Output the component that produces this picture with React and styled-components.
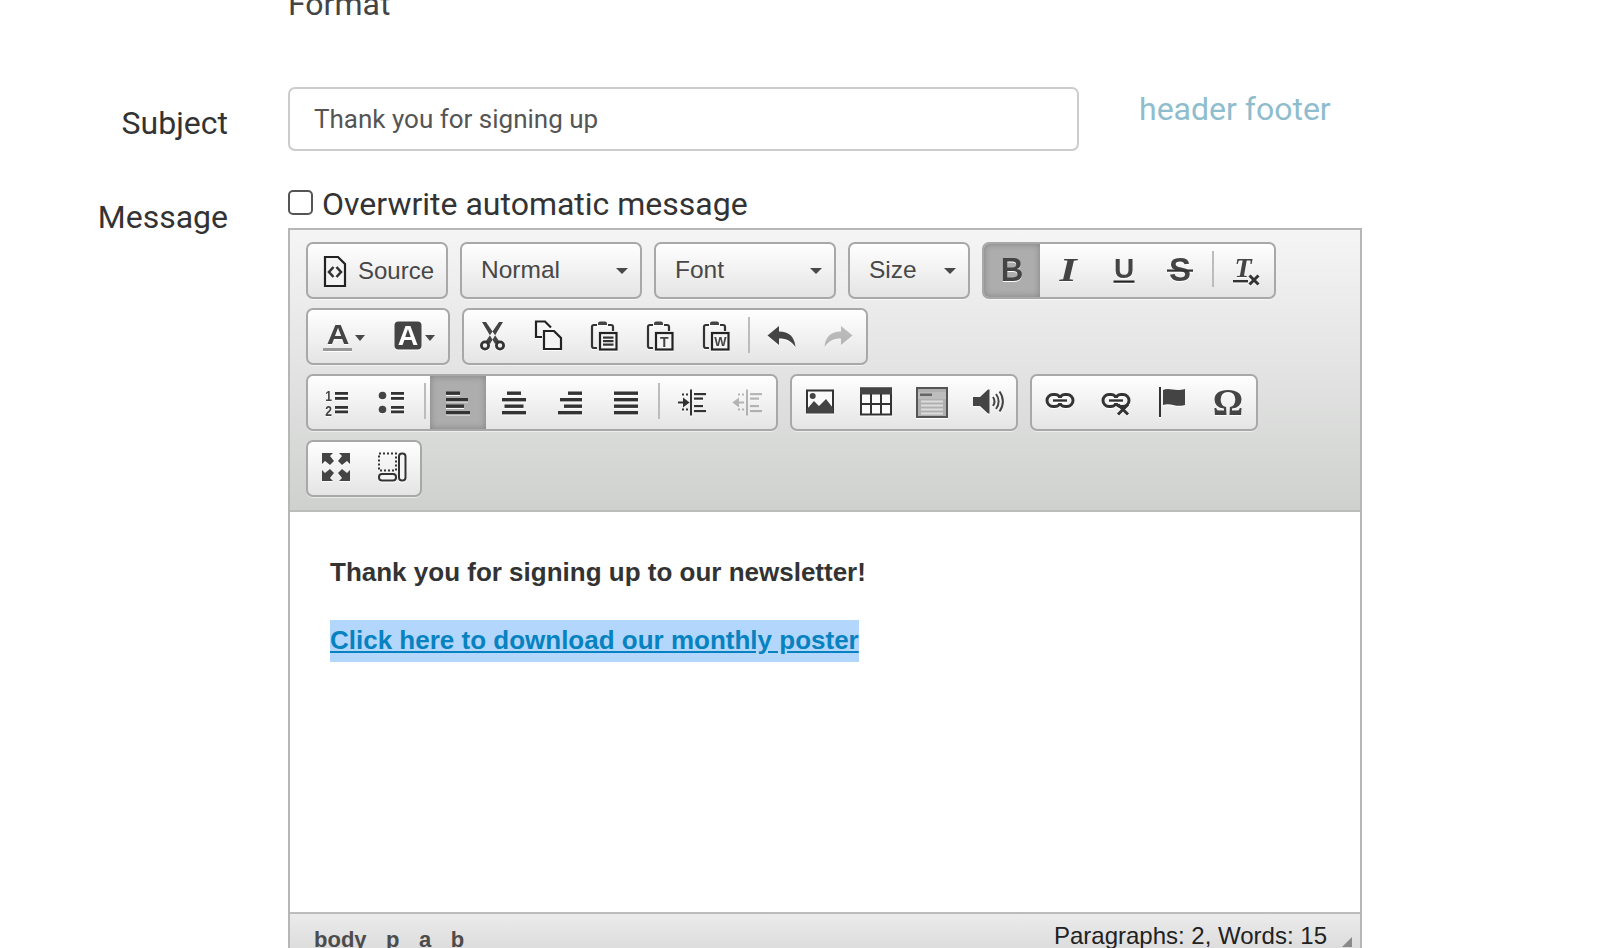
import React from "react";
import styled, { createGlobalStyle } from "styled-components";

const GlobalStyle = createGlobalStyle`
  html, body {
    margin: 0;
    padding: 0;
    background: #fff;
    overflow: hidden;
  }
  body {
    font-family: Roboto, "Liberation Sans", sans-serif;
    color: #333;
  }
`;

const Page = styled.div`
  height: 948px;
  overflow: hidden;
`;

const FormatRow = styled.div`
  margin-top: -15px;
  padding-left: 288px;
  font-size: 32px;
  line-height: 38px;
  color: #444;
`;

const FieldRow = styled.div`
  display: flex;
  gap: 60px;
  margin-top: ${props => props.$top}px;
`;

const FieldLabel = styled.label`
  width: 228px;
  flex: none;
  text-align: right;
  font-size: 32px;
  line-height: 38px;
  padding-top: ${props => props.$top}px;
  color: #333;
`;

const SubjectInput = styled.input`
  width: 791px;
  height: 64px;
  box-sizing: border-box;
  border: 2px solid #ccc;
  border-radius: 7px;
  padding: 0 24px;
  font-family: Roboto, sans-serif;
  font-size: 26px;
  color: #555;
  background: #fff;
  outline: none;
`;

const FooterLink = styled.a`
  padding-top: 3px;
  font-size: 32px;
  line-height: 38px;
  color: #8fbdcd;
  text-decoration: none;
`;

const MessageColumn = styled.div`
  width: 1074px;
  flex: none;
`;

const CheckLine = styled.label`
  display: flex;
  align-items: center;
  gap: 9px;
  height: 33px;
  padding-bottom: 8px;
  font-size: 32px;
  color: #333;
`;

const CheckBox = styled.span`
  width: 25px;
  height: 25px;
  box-sizing: border-box;
  border: 2px solid #555;
  border-radius: 5px;
  background: #fff;
  margin-top: -3px;
`;

const Editor = styled.div`
  border: 2px solid #b6b6b6;
  border-bottom: 0;
  background: #fff;
`;

const Toolbar = styled.div`
  display: flex;
  flex-direction: column;
  gap: 9px;
  padding: 12px 16px 13px 16px;
  background: linear-gradient(#f5f5f5, #cfd1cf);
  border-bottom: 2px solid #bcbcbc;
`;

const ToolRow = styled.div`
  display: flex;
  gap: 12px;
`;

const Group = styled.div`
  display: flex;
  height: 57px;
  box-sizing: border-box;
  border: 2px solid #a8a8a8;
  border-radius: 7px;
  background: linear-gradient(#fff, #e4e4e4);
  box-shadow: 0 1px 0 rgba(255, 255, 255, 0.5);
  overflow: hidden;
`;

const ToolButton = styled.div`
  width: ${props => props.$width || 56}px;
  display: flex;
  align-items: center;
  justify-content: center;
  gap: ${props => props.$gap || 0}px;
  background: ${props => (props.$active ? "#adadad" : "transparent")};
  box-shadow: ${props => (props.$active ? "inset 0 0 7px #808080" : "none")};
  opacity: ${props => (props.$off ? 0.32 : 1)};
  svg {
    display: block;
    overflow: visible;
    margin-bottom: 3px;
    filter: drop-shadow(0 1px 0 #fff);
  }
`;

const Separator = styled.span`
  width: 2px;
  height: 36px;
  margin: 7px 4px;
  background: #bcbcbc;
`;

const SourceButton = styled(Group)`
  width: 142px;
  align-items: center;
  gap: 7px;
  padding-left: 11px;
  font-family: "Liberation Sans", sans-serif;
  font-size: 24px;
  color: #474747;
`;

const Combo = styled(Group)`
  width: ${props => props.$width}px;
  align-items: center;
  justify-content: space-between;
  padding: 0 12px 2px 19px;
  font-family: "Liberation Sans", sans-serif;
  font-size: 24.5px;
  color: #484848;
`;

const Caret = styled.span`
  width: 0;
  height: 0;
  margin-top: 3px;
  border-left: ${props => props.$size || 6}px solid transparent;
  border-right: ${props => props.$size || 6}px solid transparent;
  border-top: 6px solid #484848;
`;

const Content = styled.div`
  height: 400px;
  box-sizing: border-box;
  padding: 41px 40px 0;
  font-family: "Liberation Sans", sans-serif;
  font-size: 26px;
  font-weight: 700;
  color: #333;
`;

const Para = styled.p`
  margin: 0 0 ${props => props.$after || 0}px;
  line-height: 38px;
`;

const Selected = styled.span`
  display: inline-block;
  line-height: 40px;
  padding-bottom: 2px;
  background: #b3d6fc;
`;

const DocLink = styled.a`
  color: #0782c1;
  text-decoration: underline;
`;

const StatusBar = styled.div`
  position: relative;
  display: flex;
  justify-content: space-between;
  height: 60px;
  box-sizing: border-box;
  padding: 8px 33px 0 24px;
  border-top: 2px solid #bcbcbc;
  background: linear-gradient(#ebebeb, #d3d3d3);
  font-family: "Liberation Sans", sans-serif;
`;

const Path = styled.div`
  display: flex;
  gap: 19.5px;
  font-size: 22px;
  font-weight: 700;
  line-height: 36px;
  color: #4c4c4c;
`;

const WordCount = styled.div`
  font-size: 24px;
  line-height: 28px;
  color: #222;
`;

const Resizer = styled.span`
  position: absolute;
  right: 8px;
  top: 23px;
  border-left: 10px solid transparent;
  border-bottom: 10px solid #8a8a8a;
`;

const Ink = "#444";

const Letter = ({ x = 16, y, size, family = "Liberation Sans", weight = 700, italic, fill = Ink, sx = 1, children }) => (
  <text
    x={x / sx}
    y={y}
    fontSize={size}
    fontFamily={family}
    fontWeight={weight}
    fontStyle={italic ? "italic" : "normal"}
    textAnchor="middle"
    fill={fill}
    transform={`scale(${sx} 1)`}
  >
    {children}
  </text>
);

const Bars = ({ rows, thick = 3.4 }) =>
  rows.map(([x, y, w], i) => <rect key={i} x={x} y={y} width={w} height={thick} fill="#333" />);

const ClipBoard = ({ children }) => (
  <>
    <path d="M9 6H6a2 2 0 0 0-2 2v19a2 2 0 0 0 2 2h3M20 6h3a2 2 0 0 1 2 2v4" fill="none" stroke="#333" strokeWidth="2.2" />
    <path d="M10 6V4.5a2 2 0 0 1 2-2h5a2 2 0 0 1 2 2V6z" fill={Ink} />
    <rect x="12" y="14" width="16.5" height="16.5" fill="#f4f4f4" stroke="#222" strokeWidth="2.2" />
    {children}
  </>
);

const Chain = () => (
  <>
    <rect x="3" y="9.5" width="14" height="12" rx="6" fill="none" stroke="#333" strokeWidth="3" />
    <rect x="15" y="9.5" width="14" height="12" rx="6" fill="none" stroke="#333" strokeWidth="3" />
    <path d="M9 15.500h14" fill="none" stroke="#fff" strokeWidth="5" />
    <path d="M9 15.500h14" fill="none" stroke="#333" strokeWidth="2.4" />
  </>
);

const Cross = ({ x, y, r = 5 }) => (
  <path d={`M${x - r} ${y - r}L${x + r} ${y + r}M${x + r} ${y - r}L${x - r} ${y + r}`} stroke="#333" strokeWidth="3" fill="none" />
);

const ArrowShape = "M1.500 16.500 13 7v5.500c10 0 15.500 5 16.500 15.500-4-6-9-8.500-16.500-8.500V26z";

const icons = {
  source: (
    <>
      <path d="M6 2h13l7 7v22H6z" fill="#f4f4f4" stroke="#222" strokeWidth="2.2" />
      <path d="M14.500 12l-4.500 5 4.500 5M17.500 12l4.500 5-4.500 5" fill="none" stroke="#333" strokeWidth="2.600" />
    </>
  ),
  bold: <Letter y={28} size={33} sx={0.95}>B</Letter>,
  italic: <Letter y={28} size={34} family="Liberation Serif" italic sx={1.3}>I</Letter>,
  underline: (
    <>
      <Letter y={25} size={28}>U</Letter>
      <rect x="5.5" y="27.5" width="21" height="2.2" fill="#222" />
    </>
  ),
  strike: (
    <>
      <Letter y={28} size={33}>S</Letter>
      <rect x="3" y="16.5" width="26" height="2.2" fill="#333" />
    </>
  ),
  removeFormat: (
    <>
      <Letter x={13} y={24} size={28} family="Liberation Serif" italic>T</Letter>
      <rect x="3" y="27" width="15" height="2.4" fill="#333" />
      <Cross x={24} y={27} r={4.5} />
    </>
  ),
  fontColor: (
    <>
      <Letter y={25} size={28} sx={1.12}>A</Letter>
      <rect x="1" y="29" width="29" height="3" fill="#999" />
    </>
  ),
  bgColor: (
    <>
      <rect x="2.5" y="2.5" width="27" height="28" rx="4" fill={Ink} />
      <Letter y={26} size={27} fill="#fff" sx={1.05}>A</Letter>
    </>
  ),
  cut: (
    <>
      <path d="M6 3h4l13 19-4 3zM27 3h-4L10 22l4 3z" fill={Ink} />
      <circle cx="9" cy="26.5" r="3.6" fill="none" stroke="#333" strokeWidth="2.8" />
      <circle cx="24" cy="26.5" r="3.6" fill="none" stroke="#333" strokeWidth="2.8" />
    </>
  ),
  copy: (
    <>
      <path d="M10 18H4V2.5h9l6 6" fill="none" stroke="#222" strokeWidth="2.2" />
      <path d="M12 30V12h10l7 7v11z" fill="#f4f4f4" stroke="#222" strokeWidth="2.2" />
    </>
  ),
  paste: (
    <ClipBoard>
      <Bars thick={2.2} rows={[[15, 17.5, 10.5], [15, 21, 10.5], [15, 24.5, 10.5]]} />
    </ClipBoard>
  ),
  pasteText: (
    <ClipBoard>
      <Letter x={20.3} y={27.5} size={14}>T</Letter>
    </ClipBoard>
  ),
  pasteWord: (
    <ClipBoard>
      <Letter x={20.3} y={27} size={13}>W</Letter>
    </ClipBoard>
  ),
  undo: <path d={ArrowShape} fill={Ink} />,
  redo: <path d={ArrowShape} fill={Ink} transform="matrix(-1 0 0 1 32 0)" />,
  numList: (
    <>
      <Letter x={8.5} y={16} size={15} sx={0.8}>1</Letter>
      <Letter x={8.5} y={31} size={15} sx={0.8}>2</Letter>
      <Bars thick={2.8} rows={[[15, 7, 13], [15, 12, 13], [15, 21, 13], [15, 25.5, 13]]} />
    </>
  ),
  bulletList: (
    <>
      <circle cx="6.5" cy="10.5" r="3.8" fill={Ink} />
      <circle cx="6.5" cy="24.5" r="3.8" fill={Ink} />
      <Bars thick={2.8} rows={[[15, 7, 13], [15, 12, 13], [15, 21, 13], [15, 25.5, 13]]} />
    </>
  ),
  alignLeft: <Bars rows={[[4, 6.5, 14], [4, 13, 22], [4, 19.5, 18], [4, 26, 24]]} />,
  alignCenter: <Bars rows={[[9, 6.5, 14], [4, 13, 24], [6.5, 19.5, 19], [4, 26, 24]]} />,
  alignRight: <Bars rows={[[14, 6.5, 14], [6, 13, 22], [10, 19.5, 18], [4, 26, 24]]} />,
  justify: <Bars rows={[[4, 6.5, 24], [4, 13, 24], [4, 19.5, 24], [4, 26, 24]]} />,
  indent: (
    <>
      <rect x="14" y="4.5" width="2" height="26" fill="#333" />
      <Bars thick={2.2} rows={[[18, 8, 12], [18, 12.5, 9], [18, 20, 9], [18, 25, 12]]} />
      <path d="M2 17.5h7M8 14.5v6l4-3z" stroke="#333" strokeWidth="2" fill="#333" />
      <path d="M6 9.5h2M10 9.5h2M6 24.5h2M10 24.5h2" stroke="#333" strokeWidth="2" />
    </>
  ),
  outdent: (
    <>
      <rect x="14" y="4.5" width="2" height="26" fill="#333" />
      <Bars thick={2.2} rows={[[18, 8, 12], [18, 12.5, 9], [18, 20, 9], [18, 25, 12]]} />
      <path d="M5 17.5h7M6 14.5v6l-4-3z" stroke="#333" strokeWidth="2" fill="#333" />
      <path d="M6 9.5h2M10 9.5h2M6 24.5h2M10 24.5h2" stroke="#333" strokeWidth="2" />
    </>
  ),
  image: (
    <>
      <rect x="3" y="5.5" width="26" height="22" fill="#fbfbfb" stroke="#333" strokeWidth="2" />
      <circle cx="8.7" cy="11" r="3" fill={Ink} />
      <path d="M3 24l7-8 5 5 7-7 7 9v5H3z" fill={Ink} />
    </>
  ),
  table: (
    <>
      <rect x="1" y="3.5" width="30" height="26" fill="#fbfbfb" stroke="#333" strokeWidth="2" />
      <rect x="0" y="2.5" width="32" height="7" fill={Ink} />
      <path d="M11 9v20M21 9v20M1 19h30" stroke="#333" strokeWidth="2" />
    </>
  ),
  iframe: (
    <>
      <rect x="1" y="3" width="30" height="29" fill="#b0b0b0" stroke="#555" strokeWidth="2" />
      <rect x="2" y="7" width="28" height="7" fill="#bdbdbd" />
      <rect x="4" y="8.5" width="12" height="2.5" fill="#666" />
      <path d="M5 16.5h22M5 20.5h22M5 24.5h22M5 28.5h22" stroke="#dcdcdc" strokeWidth="2" />
    </>
  ),
  audio: (
    <>
      <path d="M1 12h7l8-7.5h1.5v24H16L8 21H1z" fill={Ink} />
      <path d="M21 12c2 3 2 6 0 9M24 9c3.500 4.500 3.500 10.500 0 15M27.500 6.500c4.500 6 4.500 14 0 20" fill="none" stroke="#444" strokeWidth="2" />
    </>
  ),
  link: <Chain />,
  unlink: (
    <>
      <Chain />
      <Cross x={23} y={24.5} r={5} />
    </>
  ),
  flag: (
    <>
      <rect x="3" y="2" width="2" height="30" fill="#333" />
      <path d="M7 5c7-3 11 2 22-1v16c-10 3-14-3-22 0z" fill={Ink} />
    </>
  ),
  omega: <Letter y={30} size={38} family="Liberation Serif">Ω</Letter>,
  maximize: (
    <path
      d="M2 2h11l-3 3 4 5-4 4-5-4-3 3zM30 2H19l3 3-4 5 4 4 5-4 3 3zM2 30h11l-3-3 4-5-4-4-5 4-3-3zM30 30H19l3-3-4-5 4-4 5 4 3-3z"
      fill={Ink}
    />
  ),
  blocks: (
    <>
      <rect x="3" y="2.500" width="17" height="17" fill="none" stroke="#333" strokeWidth="2" strokeDasharray="2 2" />
      <rect x="3" y="23" width="17" height="6.500" rx="3" fill="#f4f4f4" stroke="#333" strokeWidth="2" />
      <rect x="23" y="2.500" width="6.500" height="27" rx="3" fill="#f4f4f4" stroke="#333" strokeWidth="2" />
    </>
  ),
};

const Icon = ({ name, width = 32 }) => (
  <svg width={width} height="32" viewBox={`0 0 ${width} 32`} aria-hidden="true">
    {icons[name]}
  </svg>
);

const Tool = ({ name, ...rest }) => (
  <ToolButton {...rest}>
    <Icon name={name} />
  </ToolButton>
);

const toolRows = [
  [
    [["bold", { $active: true }], ["italic"], ["underline"], ["strike"], "|", ["removeFormat"]],
  ],
  [
    [["cut"], ["copy"], ["paste"], ["pasteText"], ["pasteWord"], "|", ["undo"], ["redo", { $off: true }]],
  ],
  [
    [["numList"], ["bulletList"], "|", ["alignLeft", { $active: true }], ["alignCenter"], ["alignRight"], ["justify"], "|", ["indent"], ["outdent", { $off: true }]],
    [["image"], ["table"], ["iframe"], ["audio"]],
    [["link"], ["unlink"], ["flag"], ["omega"]],
  ],
  [
    [["maximize"], ["blocks"]],
  ],
];

const renderGroup = (tools, key) => (
  <Group key={key}>
    {tools.map((tool, i) =>
      tool === "|" ? <Separator key={i} /> : <Tool key={i} name={tool[0]} {...tool[1]} />
    )}
  </Group>
);

export default function App() {
  return (
    <Page>
      <GlobalStyle />
      <FormatRow>Format</FormatRow>
      <FieldRow $top={64}>
        <FieldLabel $top={17}>Subject</FieldLabel>
        <SubjectInput readOnly value="Thank you for signing up" />
        <FooterLink>header footer</FooterLink>
      </FieldRow>
      <FieldRow $top={36}>
        <FieldLabel $top={11}>Message</FieldLabel>
        <MessageColumn>
          <CheckLine>
            <CheckBox />
            Overwrite automatic message
          </CheckLine>
          <Editor>
            <Toolbar>
              <ToolRow>
                <SourceButton>
                  <Icon name="source" />
                  Source
                </SourceButton>
                <Combo $width={182}>Normal<Caret /></Combo>
                <Combo $width={182}>Font<Caret /></Combo>
                <Combo $width={122}>Size<Caret /></Combo>
                {toolRows[0].map(renderGroup)}
              </ToolRow>
              <ToolRow>
                <Group>
                  <ToolButton $width={70} $gap={1}>
                    <Icon name="fontColor" />
                    <Caret $size={5} />
                  </ToolButton>
                  <ToolButton $width={70} $gap={1}>
                    <Icon name="bgColor" />
                    <Caret $size={5} />
                  </ToolButton>
                </Group>
                {toolRows[1].map(renderGroup)}
              </ToolRow>
              <ToolRow>{toolRows[2].map(renderGroup)}</ToolRow>
              <ToolRow>{toolRows[3].map(renderGroup)}</ToolRow>
            </Toolbar>
            <Content>
              <Para $after={29}>Thank you for signing up to our newsletter!</Para>
              <Para>
                <Selected>
                  <DocLink>Click here to download our monthly poster</DocLink>
                </Selected>
              </Para>
            </Content>
            <StatusBar>
              <Path>
                <span>body</span>
                <span>p</span>
                <span>a</span>
                <span>b</span>
              </Path>
              <WordCount>Paragraphs: 2, Words: 15</WordCount>
              <Resizer />
            </StatusBar>
          </Editor>
        </MessageColumn>
      </FieldRow>
    </Page>
  );
}
